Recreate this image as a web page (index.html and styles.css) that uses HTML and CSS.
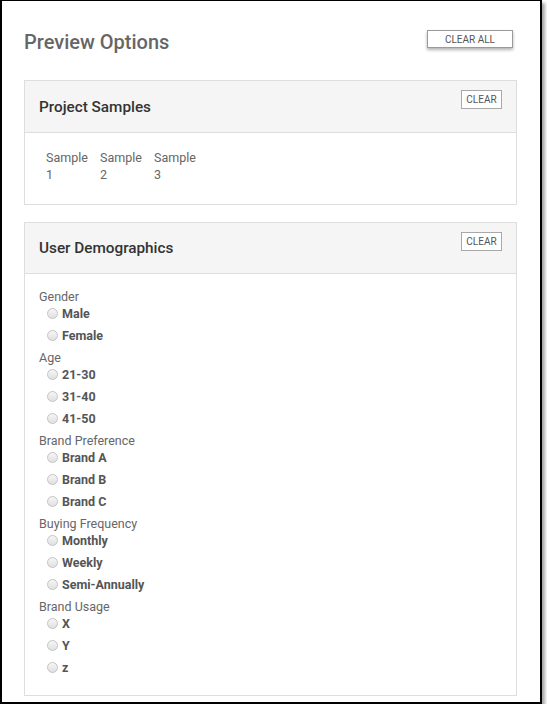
FILE: index.html
```html
<!DOCTYPE html>
<html>
<head>
<meta charset="utf-8">
<link rel="stylesheet" href="styles.css">
</head>
<body>
<div class="window">
  <div class="title-row">
    <h1 class="title">Preview Options</h1>
    <button class="btn btn-all">CLEAR ALL</button>
  </div>

  <section class="card">
    <div class="card-head">
      <h2 class="card-title">Project Samples</h2>
      <button class="btn btn-clear">CLEAR</button>
    </div>
    <div class="card-body samples">
      <div class="sample">Sample 1</div>
      <div class="sample">Sample 2</div>
      <div class="sample">Sample 3</div>
    </div>
  </section>

  <section class="card card-demo">
    <div class="card-head">
      <h2 class="card-title">User Demographics</h2>
      <button class="btn btn-clear">CLEAR</button>
    </div>
    <div class="card-body demo">
      <div class="group">
        <div class="group-label">Gender</div>
        <label class="opt"><span class="radio"></span>Male</label>
        <label class="opt"><span class="radio"></span>Female</label>
      </div>
      <div class="group">
        <div class="group-label">Age</div>
        <label class="opt"><span class="radio"></span>21-30</label>
        <label class="opt"><span class="radio"></span>31-40</label>
        <label class="opt"><span class="radio"></span>41-50</label>
      </div>
      <div class="group">
        <div class="group-label">Brand Preference</div>
        <label class="opt"><span class="radio"></span>Brand A</label>
        <label class="opt"><span class="radio"></span>Brand B</label>
        <label class="opt"><span class="radio"></span>Brand C</label>
      </div>
      <div class="group">
        <div class="group-label">Buying Frequency</div>
        <label class="opt"><span class="radio"></span>Monthly</label>
        <label class="opt"><span class="radio"></span>Weekly</label>
        <label class="opt"><span class="radio"></span>Semi-Annually</label>
      </div>
      <div class="group">
        <div class="group-label">Brand Usage</div>
        <label class="opt"><span class="radio"></span>X</label>
        <label class="opt"><span class="radio"></span>Y</label>
        <label class="opt"><span class="radio"></span>z</label>
      </div>
    </div>
  </section>
</div>
</body>
</html>
```
FILE: styles.css
```css
* { box-sizing: border-box; }
html, body { margin: 0; padding: 0; background: #fff; }
body { font-family: Roboto, "Liberation Sans", sans-serif; }

.window {
  width: 542px;
  height: 704px;
  border-top: 1px solid #000;
  border-left: 2px solid #000;
  border-right: 2px solid #000;
  border-bottom: 2px solid #000;
  box-shadow: 3px 3px 3px rgba(0,0,0,0.35);
  padding: 29px 23px 0 22px;
  background: #fff;
  overflow: hidden;
}

.title-row {
  display: flex;
  justify-content: space-between;
  align-items: flex-start;
  height: 24px;
  margin-bottom: 26px;
}
.title {
  margin: 0;
  font-size: 20px;
  line-height: 24px;
  font-weight: 500;
  color: #666;
}
.btn {
  font-family: Roboto, "Liberation Sans", sans-serif;
  background: #fff;
  border: 1px solid #9a9a9a;
  color: #555;
  font-size: 10px;
  padding: 0;
  cursor: pointer;
}
.btn-all {
  width: 86px;
  height: 18px;
  margin-right: 4px;
  box-shadow: 0 2px 3px rgba(0,0,0,0.3);
}
.btn-clear {
  width: 41px;
  height: 19px;
  margin-top: 9px;
  border-color: #a8a8a8;
}

.card {
  border: 1px solid #dedede;
  margin-bottom: 17px;
}
.card-head {
  display: flex;
  justify-content: space-between;
  align-items: flex-start;
  height: 52px;
  padding: 0 14px 0 14px;
  background: #f5f5f5;
  border-bottom: 1px solid #dedede;
}
.card-demo .card-head {
  height: 51px;
}
.card-title {
  margin: 0;
  align-self: center;
  font-size: 15.3px;
  font-weight: 500;
  color: #333;
}

.samples {
  display: flex;
  gap: 10px;
  padding: 16px 14px 21px 21px;
}
.sample {
  width: 44px;
  font-size: 12.5px;
  line-height: 17px;
  color: #666;
}

.demo {
  padding: 14px 14px 14px 14px;
}
.group-label {
  font-size: 12.5px;
  line-height: 17px;
  color: #666;
}
.opt {
  display: flex;
  align-items: center;
  font-size: 12.5px;
  font-weight: 700;
  line-height: 17px;
  color: #555;
  margin-bottom: 5px;
  padding-left: 8px;
}
.radio {
  width: 11px;
  height: 11px;
  border-radius: 50%;
  border: 1px solid #c4c4c4;
  background: linear-gradient(#f6f6f6, #e0e0e0);
  margin-right: 4px;
  flex: none;
}
```
